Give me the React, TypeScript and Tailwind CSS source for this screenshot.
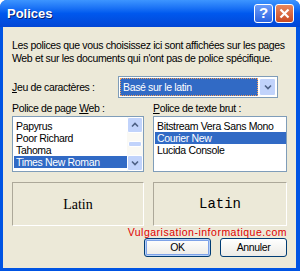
import { useState } from 'react';

const webFonts = ['Papyrus', 'Poor Richard', 'Tahoma', 'Times New Roman'];
const textFonts = ['Bitstream Vera Sans Mono', 'Courier New', 'Lucida Console'];

const ui = "font-['Liberation_Sans',Arial,sans-serif] text-[10.5px] tracking-[-0.35px] leading-[13px]";

function XpButton({ label, primary }: { label: string; primary?: boolean }) {
  return (
    <button
      className={`w-[67px] h-[19px] rounded-[3px] border border-[#003C74] bg-gradient-to-b from-white to-[#ECEBE6] text-black ${ui} ${
        primary ? 'shadow-[inset_0_0_0_1px_#B7D1F8,inset_0_0_0_2px_#7DA2E8]' : ''
      }`}
    >
      {label}
    </button>
  );
}

function ListBox({ items, selected, scroll }: { items: string[]; selected: string; scroll?: boolean }) {
  return (
    <div className="h-[56px] border border-[#7F9DB9] bg-white flex overflow-hidden">
      <div className="flex-1 pt-[3px] pl-[1px]">
        {items.map((f) => (
          <div
            key={f}
            className={`h-[12px] leading-[12px] pl-[2px] whitespace-nowrap ${f === selected ? 'bg-[#316AC5] text-white' : 'text-black'}`}
          >
            {f}
          </div>
        ))}
      </div>
      {scroll && (
        <div className="w-[16px] bg-[#FAF9F4] flex flex-col justify-between">
          <div className="h-[16px] rounded-[2px] bg-[#C1D3FB] border border-white flex items-center justify-center">
            <svg width="8" height="6" viewBox="0 0 8 6">
              <path d="M1 4.5 L4 1.5 L7 4.5" stroke="#4D6185" strokeWidth="1.6" fill="none" />
            </svg>
          </div>
          <div className="h-[6px] mx-[1px] rounded-[2px] bg-[#C1D3FB] border border-white" />
          <div className="h-[16px] rounded-[2px] bg-[#C1D3FB] border border-white flex items-center justify-center">
            <svg width="8" height="6" viewBox="0 0 8 6">
              <path d="M1 1.5 L4 4.5 L7 1.5" stroke="#4D6185" strokeWidth="1.6" fill="none" />
            </svg>
          </div>
        </div>
      )}
    </div>
  );
}

export default function App() {
  const [charset] = useState('Basé sur le latin');

  return (
    <div className="w-[300px] h-[271px] bg-[#0054E3] rounded-t-[7px] flex flex-col overflow-hidden">
      <div className="h-[27px] shrink-0 bg-gradient-to-b from-[#3D95FF] via-[#0058EE] to-[#0246D5] flex items-center pl-[7px] pr-[6px]">
        <span className="flex-1 text-white font-bold font-['Liberation_Sans',Arial,sans-serif] text-[13px] [text-shadow:1px_1px_0_#0A1E6E]">
          Polices
        </span>
        <div className="w-[19px] h-[19px] rounded-[3px] border border-white bg-gradient-to-b from-[#6B9BF8] to-[#2A63E2] flex items-center justify-center text-white font-bold text-[15px] font-['Liberation_Sans',Arial,sans-serif]">
          ?
        </div>
        <div className="ml-[2px] w-[19px] h-[19px] rounded-[3px] border border-white bg-gradient-to-b from-[#E8875E] to-[#C94A22] flex items-center justify-center">
          <svg width="11" height="11" viewBox="0 0 11 11">
            <path d="M1.5 1.5 L9.5 9.5 M9.5 1.5 L1.5 9.5" stroke="white" strokeWidth="2.2" />
          </svg>
        </div>
      </div>

      <div className={`flex-1 ml-[3px] mr-[4px] mb-[3px] bg-[#ECE9D8] px-[9px] pt-[12px] text-black ${ui}`}>
        <p className="whitespace-nowrap">
          Les polices que vous choisissez ici sont affichées sur les pages
          <br />
          Web et sur les documents qui n'ont pas de police spécifique.
        </p>

        <div className="mt-[11px] flex items-center">
          <span className="w-[106px]">
            <u>J</u>eu de caractères :
          </span>
          <div className="w-[160px] h-[22px] border border-[#7F9DB9] bg-white flex p-[1px]">
            <div className="flex-1 bg-[#316AC5] text-white outline outline-1 outline-dotted outline-[#F5A05A] -outline-offset-1 pl-[3px] flex items-center">
              {charset}
            </div>
            <div className="w-[17px] ml-[1px] rounded-[2px] bg-[#C1D3FB] border border-white flex items-center justify-center">
              <svg width="8" height="6" viewBox="0 0 8 6">
                <path d="M1 1.5 L4 4.5 L7 1.5" stroke="#4D6185" strokeWidth="1.6" fill="none" />
              </svg>
            </div>
          </div>
        </div>

        <div className="mt-[4px] grid grid-cols-[132px_134px] gap-x-[9px]">
          <div>
            <div className="mb-[1px]">
              Police de page <u>W</u>eb :
            </div>
            <ListBox items={webFonts} selected="Times New Roman" scroll />
          </div>
          <div>
            <div className="mb-[1px]">
              <u>P</u>olice de texte brut :
            </div>
            <ListBox items={textFonts} selected="Courier New" />
          </div>

          <div className="mt-[10px] h-[44px] border border-[#ACA899] border-r-white border-b-white flex items-center justify-center font-['Liberation_Serif',serif] text-[14px] tracking-normal">
            Latin
          </div>
          <div className="mt-[10px] h-[44px] border border-[#ACA899] border-r-white border-b-white flex items-center justify-center font-['Liberation_Mono',monospace] text-[14px] tracking-normal">
            Latin
          </div>
        </div>

        <div className="flex justify-end h-[12px] leading-[12px] text-[#E00000] tracking-[0.5px]">Vulgarisation-informatique.com</div>

        <div className="flex justify-end gap-[9px]">
          <XpButton label="OK" primary />
          <XpButton label="Annuler" />
        </div>
      </div>
    </div>
  );
}
